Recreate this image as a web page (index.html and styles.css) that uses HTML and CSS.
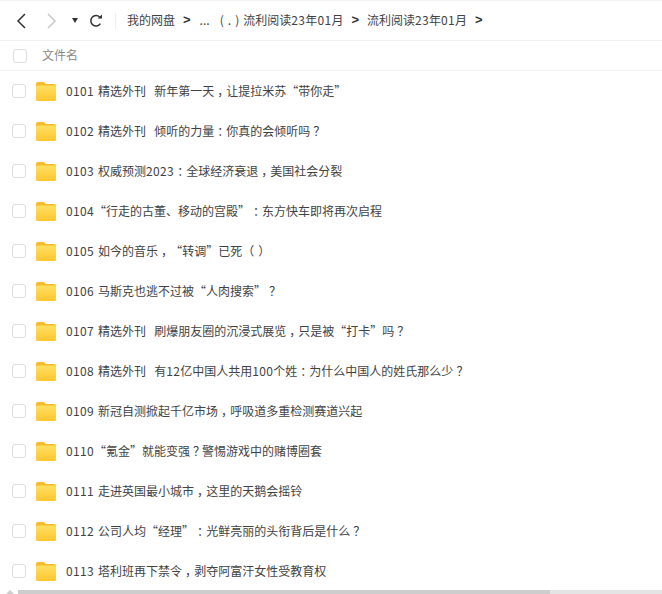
FILE: index.html
```html
<!DOCTYPE html>
<html lang="zh-CN">
  <head>
    <meta charset="UTF-8">
    <title>流利阅读23年01月</title>
    <link rel="stylesheet" href="styles.css">
  </head>
  <body>
    <svg class="defs" width="0" height="0">
      <defs>
        <linearGradient id="folderFill" x1="0" y1="0" x2="0" y2="1">
          <stop offset="0" stop-color="#ffe063"/>
          <stop offset="1" stop-color="#ffc62f"/>
        </linearGradient>
        <symbol id="folder" viewBox="0 0 20 19">
          <path d="M0 2 Q0 0 2 0 H7 Q8.500 0 9.500 2 H18 Q20 2 20 4 V17 Q20 19 18 19 H2 Q0 19 0 17 Z" fill="#fbb928"/>
          <path d="M0 5 Q0 3.500 2 3.500 H18 Q20 3.500 20 5 V17 Q20 19 18 19 H2 Q0 19 0 17 Z" fill="url(#folderFill)"/>
        </symbol>
      </defs>
    </svg>
    <div class="toolbar">
      <svg class="nav-icon" width="10" height="16" viewBox="0 0 10 16"><path d="M9 1 L2 8 L9 15" fill="none" stroke="#333" stroke-width="1.5"/></svg>
      <svg class="nav-icon forward" width="10" height="16" viewBox="0 0 10 16"><path d="M1 1 L8 8 L1 15" fill="none" stroke="#c8c8c8" stroke-width="1.5"/></svg>
      <span class="caret"></span>
      <svg class="refresh" width="14" height="14" viewBox="0 0 14 14"><path d="M10.800 3.200 A5.200 5.200 0 1 0 11.400 9.600" fill="none" stroke="#333" stroke-width="1.500"/><path d="M8.600 4.600 L13 4.600 L13 0.600 Z" fill="#333"/></svg>
      <span class="divider"></span>
      <div class="crumbs">
        <span>我的网盘</span><b>&gt;</b>
        <span class="dots">...</span>
        <span>( . ) 流利阅读<span class="num">23</span>年<span class="num">01</span>月</span><b>&gt;</b>
        <span>流利阅读<span class="num">23</span>年<span class="num">01</span>月</span><b>&gt;</b>
      </div>
    </div>
    <div class="head-row">
      <span class="check"></span>
      <span class="head-label">文件名</span>
    </div>
    <div class="list">
      <div class="row"><span class="check"></span><svg class="folder"><use href="#folder"/></svg><span class="name"><span class="num">0101</span> 精选外刊&nbsp; 新年第一天<span class="punct">，</span>让提拉米苏“带你走”</span></div>
      <div class="row"><span class="check"></span><svg class="folder"><use href="#folder"/></svg><span class="name"><span class="num">0102</span> 精选外刊&nbsp; 倾听的力量<span class="punct">：</span>你真的会倾听吗<span class="punct">？</span></span></div>
      <div class="row"><span class="check"></span><svg class="folder"><use href="#folder"/></svg><span class="name"><span class="num">0103</span> 权威预测<span class="num">2023</span><span class="punct">：</span>全球经济衰退<span class="punct">，</span>美国社会分裂</span></div>
      <div class="row"><span class="check"></span><svg class="folder"><use href="#folder"/></svg><span class="name"><span class="num">0104</span>“行走的古董、移动的宫殿”<span class="punct">：</span>东方快车即将再次启程</span></div>
      <div class="row"><span class="check"></span><svg class="folder"><use href="#folder"/></svg><span class="name"><span class="num">0105</span> 如今的音乐<span class="punct">，</span>“转调”已死（ ）</span></div>
      <div class="row"><span class="check"></span><svg class="folder"><use href="#folder"/></svg><span class="name"><span class="num">0106</span> 马斯克也逃不过被“人肉搜索”<span class="punct">？</span></span></div>
      <div class="row"><span class="check"></span><svg class="folder"><use href="#folder"/></svg><span class="name"><span class="num">0107</span> 精选外刊&nbsp; 刷爆朋友圈的沉浸式展览<span class="punct">，</span>只是被“打卡”吗<span class="punct">？</span></span></div>
      <div class="row"><span class="check"></span><svg class="folder"><use href="#folder"/></svg><span class="name"><span class="num">0108</span> 精选外刊&nbsp; 有<span class="num">12</span>亿中国人共用<span class="num">100</span>个姓<span class="punct">：</span>为什么中国人的姓氏那么少<span class="punct">？</span></span></div>
      <div class="row"><span class="check"></span><svg class="folder"><use href="#folder"/></svg><span class="name"><span class="num">0109</span> 新冠自测掀起千亿市场<span class="punct">，</span>呼吸道多重检测赛道兴起</span></div>
      <div class="row"><span class="check"></span><svg class="folder"><use href="#folder"/></svg><span class="name"><span class="num">0110</span>“氪金”就能变强<span class="punct">？</span>警惕游戏中的赌博圈套</span></div>
      <div class="row"><span class="check"></span><svg class="folder"><use href="#folder"/></svg><span class="name"><span class="num">0111</span> 走进英国最小城市<span class="punct">，</span>这里的天鹅会摇铃</span></div>
      <div class="row"><span class="check"></span><svg class="folder"><use href="#folder"/></svg><span class="name"><span class="num">0112</span> 公司人均“经理”<span class="punct">：</span>光鲜亮丽的头衔背后是什么<span class="punct">？</span></span></div>
      <div class="row"><span class="check"></span><svg class="folder"><use href="#folder"/></svg><span class="name"><span class="num">0113</span> 塔利班再下禁令<span class="punct">，</span>剥夺阿富汗女性受教育权</span></div>
    </div>
    <div class="hscroll">
      <span class="hscroll-arrow"></span>
      <span class="hscroll-thumb"></span>
    </div>
  </body>
</html>
```

FILE: styles.css
```css
html, body {
  height: 594px;
  overflow: hidden;
}

body {
  background-color: #fff;
  color: #424242;
  font-family: "Noto Sans CJK SC", "Liberation Sans", sans-serif;
  font-size: 12px;
  margin: 0;
  padding: 0;
  position: relative;
  text-spacing-trim: space-all;
  word-spacing: 1.4px;
}

.num {
  letter-spacing: 0.34px;
}

.punct {
  letter-spacing: -3px;
  padding-left: 3px;
}

.defs {
  display: block;
  height: 0;
}

.toolbar {
  align-items: center;
  border-bottom: 1px solid #eee;
  border-top: 1px solid #f2f2f2;
  box-sizing: border-box;
  display: flex;
  height: 41px;
  padding-left: 16px;
}

.nav-icon {
  flex: none;
}

.forward {
  margin-left: 21px;
}

.caret {
  border-left: 3px solid transparent;
  border-right: 3px solid transparent;
  border-top: 5px solid #333;
  margin-left: 15px;
}

.refresh {
  margin-left: 11px;
}

.divider {
  background-color: #eee;
  height: 16px;
  margin-left: 12px;
  margin-right: 11px;
  width: 1px;
}

.crumbs {
  align-items: center;
  display: flex;
  padding-bottom: 2px;
  white-space: nowrap;
}

.crumbs b {
  color: #333;
  font-family: "Liberation Sans", sans-serif;
  font-size: 13px;
  margin: 0 8px 0 8px;
}

.dots {
  margin-left: 1px;
  margin-right: 10px;
}

.head-row {
  align-items: center;
  border-bottom: 1px solid #f2f2f2;
  box-sizing: border-box;
  display: flex;
  height: 30px;
  padding-left: 13px;
}

.head-label {
  color: #888;
  margin-left: 15px;
  padding-bottom: 2px;
}

.check {
  background-color: #fff;
  border: 1px solid #ddd;
  border-radius: 3px;
  box-sizing: border-box;
  flex: none;
  height: 14px;
  width: 14px;
}

.row {
  align-items: center;
  display: flex;
  height: 40px;
  padding-left: 12px;
}

.folder {
  flex: none;
  height: 19px;
  margin-left: 10px;
  width: 20px;
}

.name {
  margin-left: 10px;
  padding-bottom: 2px;
  white-space: nowrap;
}

.hscroll {
  background-color: #fff;
  bottom: 0;
  display: flex;
  height: 4px;
  left: 0;
  position: absolute;
  right: 0;
}

.hscroll-arrow {
  border-bottom: 4px solid #ccc;
  border-left: 4px solid transparent;
  border-right: 4px solid transparent;
  box-sizing: border-box;
  height: 4px;
  margin-left: 6px;
  width: 8px;
}

.hscroll-thumb {
  background-color: #cdcdcd;
  margin-left: 4px;
  width: 532px;
}

.hscroll::after {
  background-color: #e4e4e4;
  content: "";
  flex: 1;
}
```
